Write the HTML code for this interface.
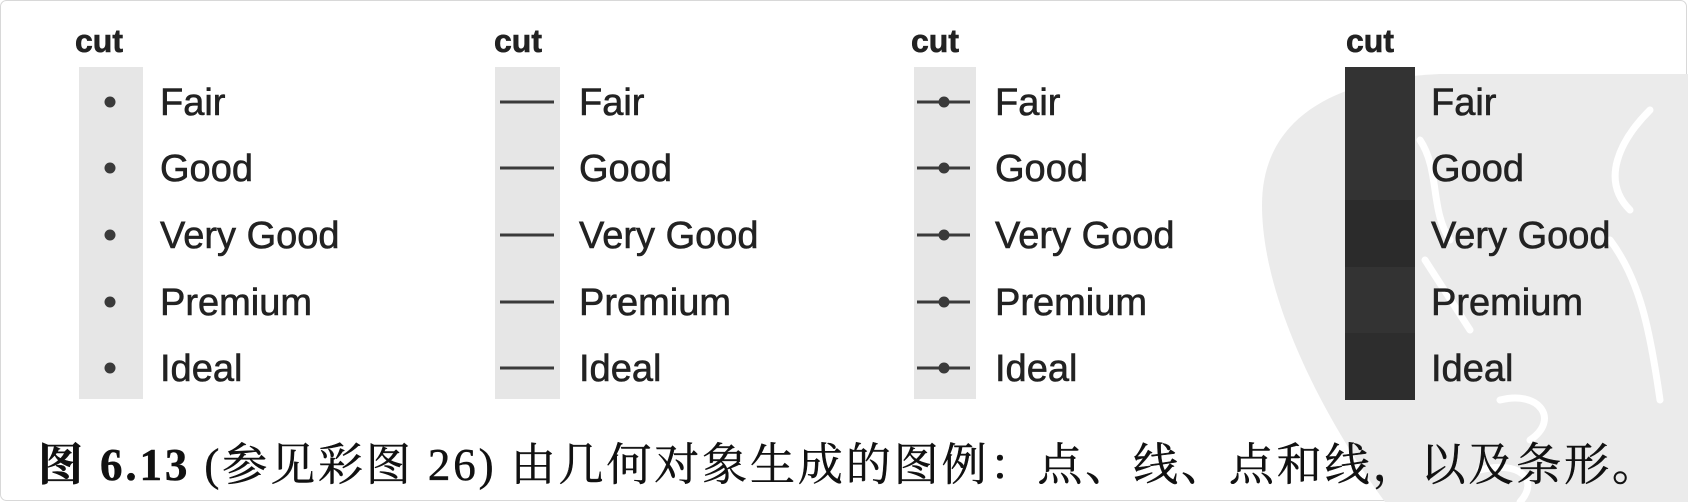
<!DOCTYPE html>
<html><head><meta charset="utf-8"><style>
html,body{margin:0;padding:0;background:#fff;}
body{width:1688px;height:502px;overflow:hidden;position:relative;}
svg{position:absolute;left:0;top:0;}
</style></head><body>
<svg width="1688" height="502" xmlns="http://www.w3.org/2000/svg">
<rect x="0.5" y="0.5" width="1686" height="500" rx="6" fill="#fff" stroke="#d8d8d8"/>
<path d="M1688,74 L1440,74 C1340,78 1262,115 1262,205 C1262,300 1325,420 1385,502 L1688,502 Z" fill="#ebebeb"/>
<g fill="none" stroke="#fff" stroke-width="7" stroke-linecap="round">
<path d="M1420,140 C1440,170 1430,210 1450,240 M1425,260 L1470,330"/>
<path d="M1650,110 C1620,140 1600,180 1630,210 M1610,240 C1640,280 1650,330 1660,400"/>
<path d="M1500,400 C1540,390 1560,420 1530,440 M1480,470 C1520,460 1540,480 1520,502"/>
</g>
<g font-family="Liberation Sans, sans-serif" fill="#222" stroke="#222" stroke-width="0.6">
<g font-weight="bold" font-size="32">
<text x="75" y="52">cut</text><text x="494" y="52">cut</text><text x="911" y="52">cut</text><text x="1346" y="52">cut</text>
</g>
</g>
<rect x="79" y="67" width="64" height="332" fill="#e6e6e6"/>
<rect x="495" y="67" width="65" height="332" fill="#e6e6e6"/>
<rect x="914" y="67" width="62" height="332" fill="#e6e6e6"/>
<rect x="1345" y="67" width="70" height="333" fill="#333"/>
<rect x="1345" y="200" width="70" height="67" fill="#2b2b2b"/>
<rect x="1345" y="333" width="70" height="67" fill="#2d2d2d"/>
<g font-family="Liberation Sans, sans-serif" fill="#222" stroke="#222" stroke-width="0.6" font-size="38">
<text x="160" y="115">Fair</text><text x="160" y="181">Good</text><text x="160" y="248">Very Good</text><text x="160" y="315">Premium</text><text x="160" y="381">Ideal</text>
<text x="579" y="115">Fair</text><text x="579" y="181">Good</text><text x="579" y="248">Very Good</text><text x="579" y="315">Premium</text><text x="579" y="381">Ideal</text>
<text x="995" y="115">Fair</text><text x="995" y="181">Good</text><text x="995" y="248">Very Good</text><text x="995" y="315">Premium</text><text x="995" y="381">Ideal</text>
<text x="1431" y="115">Fair</text><text x="1431" y="181">Good</text><text x="1431" y="248">Very Good</text><text x="1431" y="315">Premium</text><text x="1431" y="381">Ideal</text>
</g>
<g fill="#3a3a3a">
<circle cx="110" cy="102" r="5.5"/><circle cx="110" cy="168" r="5.5"/><circle cx="110" cy="235" r="5.5"/><circle cx="110" cy="302" r="5.5"/><circle cx="110" cy="368" r="5.5"/>
<circle cx="944" cy="102" r="5.5"/><circle cx="944" cy="168" r="5.5"/><circle cx="944" cy="235" r="5.5"/><circle cx="944" cy="302" r="5.5"/><circle cx="944" cy="368" r="5.5"/>
</g>
<g stroke="#3a3a3a" stroke-width="3">
<path d="M500,102H554M500,168H554M500,235H554M500,302H554M500,368H554"/>
<path d="M917,102H970M917,168H970M917,235H970M917,302H970M917,368H970"/>
</g>
<text x="38" y="480" textLength="1619" lengthAdjust="spacing" font-family="Liberation Serif, Noto Serif CJK SC, serif" font-size="45" fill="#111" stroke="#111" stroke-width="0.5"><tspan font-weight="bold">图 6.13</tspan> (参见彩图 26) 由几何对象生成的图例：点、线、点和线，以及条形。</text>
</svg>
</body></html>
